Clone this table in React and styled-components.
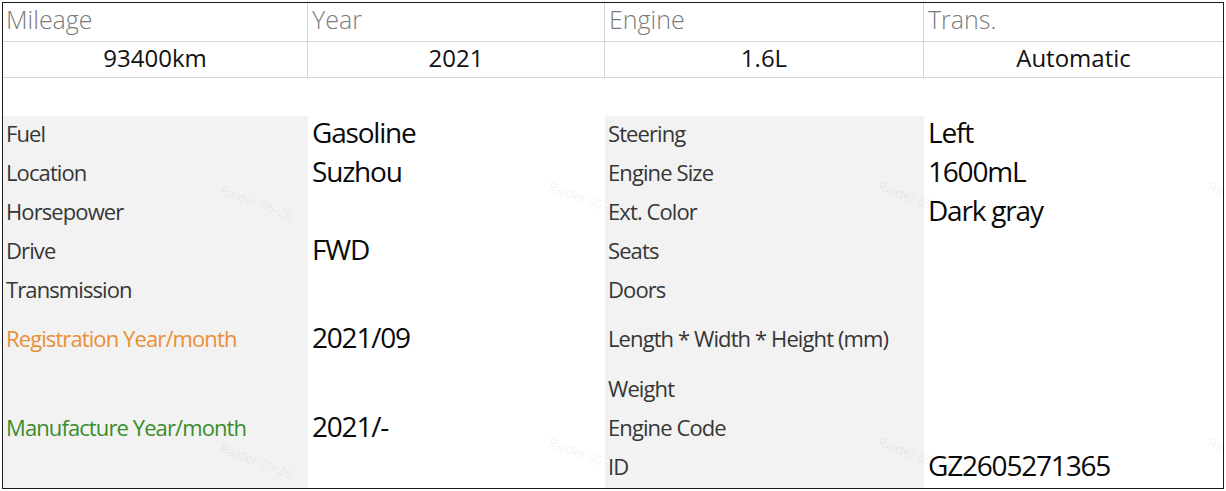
import styled, { createGlobalStyle } from 'styled-components';

const GlobalStyle = createGlobalStyle`
    html, body {
        margin: 0;
        padding: 0;
        background: #ffffff;
    }
    body {
        font-family: "Open Sans", "Noto Sans", sans-serif;
    }
`;

const summary = [
    { label: "Mileage", value: "93400km" },
    { label: "Year", value: "2021" },
    { label: "Engine", value: "1.6L" },
    { label: "Trans.", value: "Automatic" },
];

// each row: [left label, left value, right label, right value, height]
const details = [
    ["Fuel", "Gasoline", "Steering", "Left", 39],
    ["Location", "Suzhou", "Engine Size", "1600mL", 39],
    ["Horsepower", "", "Ext. Color", "Dark gray", 39],
    ["Drive", "FWD", "Seats", "", 39],
    ["Transmission", "", "Doors", "", 39],
    [{ text: "Registration Year/month", tone: "orange" }, "2021/09", "Length * Width * Height (mm)", "", 49],
    ["", "", "Weight", "", 50],
    [{ text: "Manufacture Year/month", tone: "green" }, "2021/-", "Engine Code", "", 39],
    ["", "", "ID", "GZ2605271365", 39],
];

const marks = [
    [221, 178], [549, 174], [879, 174], [1209, 174],
    [221, 436], [549, 430], [879, 430], [1209, 430],
];

const tones = {
    orange: "#e98f37",
    green: "#3a8c2b",
};

const App = () => {
    const renderLabel = (item) => {
        if (typeof item === "string") return <Label>{item}</Label>;
        return <Label $tone={tones[item.tone]}>{item.text}</Label>;
    };

    return (
        <>
            <GlobalStyle />
            <Sheet>
                <Summary>
                    {summary.map((s, i) => (
                        <HeadCell key={s.label} $last={i === summary.length - 1}>{s.label}</HeadCell>
                    ))}
                    {summary.map((s, i) => (
                        <ValueCell key={s.value} $last={i === summary.length - 1}>{s.value}</ValueCell>
                    ))}
                </Summary>
                <Gap />
                <Details>
                    {details.map((row, i) => (
                        <DetailRow key={i} $h={row[4]}>
                            <KeyCell>{row[0] ? renderLabel(row[0]) : null}</KeyCell>
                            <InfoCell>{row[1]}</InfoCell>
                            <KeyCell>{row[2] ? renderLabel(row[2]) : null}</KeyCell>
                            <InfoCell>{row[3]}</InfoCell>
                        </DetailRow>
                    ))}
                </Details>
                {marks.map(([x, y], i) => (
                    <Watermark key={i} style={{ left: x, top: y }}>Raider 05-26</Watermark>
                ))}
            </Sheet>
        </>
    );
};

const Sheet = styled.div`
    position: relative;
    box-sizing: border-box;
    margin: 2px 0 0 2px;
    width: 1222px;
    height: 487px;
    border: 1px solid #1c1c1c;
    overflow: hidden;
`;

const Summary = styled.div`
    display: grid;
    grid-template-columns: 305px 297px 319px 1fr;
    grid-template-rows: 39px 36px;
`;

const HeadCell = styled.div`
    display: flex;
    align-items: center;
    padding: 0 0 7px 4px;
    font-size: 25px;
    font-weight: 300;
    color: #7b7b7b;
    border-bottom: 1px solid #d6d6d6;
    border-right: ${p => (p.$last ? "none" : "1px solid #d6d6d6")};
    white-space: nowrap;
    &:first-child {
        padding-left: 3px;
    }
`;

const ValueCell = styled.div`
    display: flex;
    align-items: center;
    justify-content: center;
    padding-bottom: 5px;
    font-size: 24px;
    color: #111;
    border-bottom: 1px solid #d6d6d6;
    border-right: ${p => (p.$last ? "none" : "1px solid #d6d6d6")};
`;

const Gap = styled.div`
    height: 38px;
`;

const Details = styled.div`
    display: flex;
    flex-direction: column;
`;

const DetailRow = styled.div`
    display: grid;
    grid-template-columns: 305px 297px 319px 1fr;
    grid-template-rows: minmax(0, 1fr);
    height: ${p => p.$h}px;
    flex-shrink: 0;
`;

const KeyCell = styled.div`
    display: flex;
    align-items: flex-end;
    padding: 0 0 9px 3px;
    background: #f2f2f2;
`;

const Label = styled.span`
    font-size: 22px;
    line-height: 26px;
    letter-spacing: -0.9px;
    color: ${p => p.$tone || "#363636"};
    white-space: nowrap;
`;

const InfoCell = styled.div`
    display: flex;
    align-items: flex-end;
    padding: 0 0 7px 4px;
    font-size: 28px;
    line-height: 32px;
    letter-spacing: -1.2px;
    color: #0a0a0a;
    white-space: nowrap;
`;

const Watermark = styled.span`
    position: absolute;
    font-size: 13px;
    color: rgba(0, 0, 0, 0.07);
    transform: rotate(20deg);
    transform-origin: left top;
    white-space: nowrap;
    pointer-events: none;
`;

export default App;
